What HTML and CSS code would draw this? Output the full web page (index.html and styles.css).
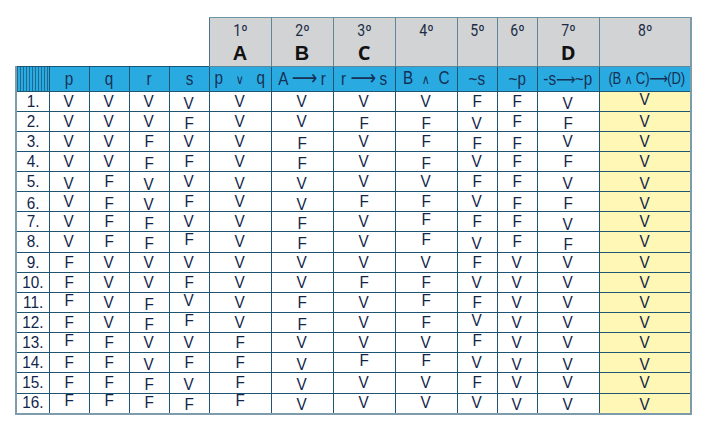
FILE: index.html
```html
<!DOCTYPE html>
<html lang="es">
<head>
<meta charset="utf-8">
<title>Tabla de verdad</title>
<link rel="stylesheet" href="styles.css">
</head>
<body>
<table class="tt">
  <colgroup>
    <col class="c-idx"><col class="c-n"><col class="c-n"><col class="c-n"><col class="c-n">
    <col class="c-w"><col class="c-w"><col class="c-w"><col class="c-w">
    <col class="c-n"><col class="c-n"><col class="c-w"><col class="c-x">
  </colgroup>
  <thead>
    <tr class="steps">
      <th class="blank" colspan="5"></th>
      <th class="step sep"><span class="num">1º</span><span class="let">A</span></th>
      <th class="step"><span class="num">2º</span><span class="let">B</span></th>
      <th class="step"><span class="num">3º</span><span class="let alt">C</span></th>
      <th class="step"><span class="num">4º</span></th>
      <th class="step sep"><span class="num">5º</span></th>
      <th class="step"><span class="num">6º</span></th>
      <th class="step sep"><span class="num">7º</span><span class="let alt">D</span></th>
      <th class="step sep last"><span class="num">8º</span></th>
    </tr>
    <tr class="heads">
      <th class="stripes first"></th>
      <th><span class="h">p</span></th>
      <th><span class="h">q</span></th>
      <th><span class="h">r</span></th>
      <th><span class="h">s</span></th>
      <th class="sep"><span class="h">p&nbsp;&nbsp;&nbsp;<span class="op">∨</span>&nbsp;&nbsp;&nbsp;q</span></th>
      <th><span class="h">A <span class="arr lg">⟶</span> r</span></th>
      <th><span class="h">r <span class="arr lg">⟶</span> s</span></th>
      <th><span class="h">B&nbsp;&nbsp;<span class="op">∧</span>&nbsp;&nbsp;C</span></th>
      <th class="sep"><span class="h">~s</span></th>
      <th><span class="h">~p</span></th>
      <th class="sep"><span class="h">-s<span class="arr">⟶</span>~p</span></th>
      <th class="sep last"><span class="h sm">(B <span class="op">∧</span> C)<span class="arr">⟶</span>(D)</span></th>
    </tr>
  </thead>
  <tbody id="rows"></tbody>
</table>
<script src="script.js"></script>
</body>
</html>
```

FILE: script.js
```js
const vals = [
  "VVVVVVVVFFVV","VVVFVVFFVFFV","VVFVVFVFFFVV","VVFFVFVFVFFV",
  "VFVVVVVVFFVV","VFVFVVFFVFFV","VFFVVFVFFFVV","VFFFVFVFVFFV",
  "FVVVVVVVFVVV","FVVFVVFFVVVV","FVFVVFVFFVVV","FVFFVFVFVVVV",
  "FFVVFVVVFVVV","FFVFFVFFVVVV","FFFVFVVVFVVV","FFFFFVVVVVVV"
];
const shifts = [
  "nnnnlnnnnnnlh","nnnnlnnlllnln","nnnnnnlnnllnn","nnnlnnlnlnnnn",
  "nlnLnllnnnnll","lnlLnnLnnnlll","nnnlnnlnhnnLn","nnnlhnlnhlnLn",
  "nnnnnnnnnnnnn","nnnnnnnnnnnnn","nhnlhnnnhnnnn","nnnlhnlnnhnnn",
  "nhnnnnnnnhnnn","nnnlnnlhhnlll","nnnllnlnnnnnn","nhhnlhlnnnlll"
];
const sepCols = [5, 9, 11, 12];
const tb = document.getElementById("rows");
vals.forEach((row, r) => {
  const tr = document.createElement("tr");
  if (r === 7 || r === 14) tr.className = "tall";
  const cells = [(r + 1) + "."].concat(row.split(""));
  cells.forEach((t, i) => {
    const td = document.createElement("td");
    const sp = document.createElement("span");
    sp.textContent = t;
    const s = shifts[r][i];
    sp.className = "t" + (s === "l" ? " lo" : s === "L" ? " lo2" : s === "h" ? " hi" : "");
    td.appendChild(sp);
    const cls = [];
    if (i === 0) cls.push("idx");
    if (sepCols.includes(i)) cls.push("sep");
    if (i === 12) cls.push("res");
    td.className = cls.join(" ");
    tr.appendChild(td);
  });
  tb.appendChild(tr);
});
```

FILE: styles.css
```css
html, body {
  margin: 0;
  background: #ffffff;
}
body {
  font-family: "Liberation Sans", Arial, sans-serif;
  color: #12264a;
}
.tt {
  margin: 17px 0 0 15px;
  border-collapse: collapse;
  table-layout: fixed;
  width: 675px;
}
.c-idx { width: 33px; }
.c-n { width: 40px; }
.c-w { width: 62px; }
.c-x { width: 92px; }

th, td {
  padding: 0;
  text-align: center;
  font-weight: normal;
}

/* step row */
.blank {
  border: none;
  background: transparent;
}
.step {
  height: 49px;
  background: #d1d3d4;
  border: 1px solid #5f8798;
  border-top-color: #6c95a5;
  vertical-align: top;
  padding-top: 3px;
  box-sizing: border-box;
}
.num {
  display: block;
  font-family: "Roboto", "Liberation Sans", sans-serif;
  font-size: 16px;
  line-height: 19px;
  color: #1b2b45;
  transform: scaleX(0.88);
}
.let {
  display: block;
  font-family: "Liberation Sans", sans-serif;
  font-weight: bold;
  font-size: 20px;
  line-height: 26px;
  color: #111;
}
.let.alt {
  font-family: "Open Sans", sans-serif;
  font-size: 20px;
}

/* header row */
.heads th {
  height: 24px;
  background: #29abe2;
  border: 1px solid #1d5673;
  font-size: 18px;
  line-height: 18px;
  color: #173055;
  white-space: nowrap;
}
.h {
  display: inline-block;
  transform: scaleX(0.85);
}
.h.sm {
  font-size: 16px;
  transform: scaleX(0.82);
  letter-spacing: -0.2px;
}
.op {
  font-size: 13px;
  font-family: "DejaVu Sans", sans-serif;
}
.arr {
  font-family: "DejaVu Sans", sans-serif;
  font-size: 16px;
  line-height: 16px;
  letter-spacing: -1px;
}
.arr.lg {
  font-size: 21px;
}
.stripes {
  background: repeating-linear-gradient(90deg, #1f6a92 0 1px, #29abe2 1px 3px) !important;
}
.heads th.first {
  border-left: 2px solid #7d9bab;
}

/* data */
tbody td {
  height: 20px;
  border: 1px solid #1f5472;
  font-size: 17px;
  line-height: 14px;
  vertical-align: middle;
  box-sizing: border-box;
}
tbody tr.tall td { height: 21px; }
.t {
  display: inline-block;
  transform: scaleX(0.9);
}
.t.lo { transform: translateY(2px) scaleX(0.9); }
.t.lo2 { transform: translateY(3px) scaleX(0.9); }
.t.hi { transform: translateY(-2px) scaleX(0.9); }
tbody td.idx {
  border-left: 2px solid #7d9bab;
  font-size: 17px;
}
tbody td.res {
  background: #fff7b5;
  border-right: 2px solid #7d9bab;
}
tbody tr:last-child td {
  border-bottom: 2px solid #7d9bab;
}
.sep {
  border-left-color: #4d7486 !important;
}
.last {
  border-right: 2px solid #7d9bab !important;
}
```
